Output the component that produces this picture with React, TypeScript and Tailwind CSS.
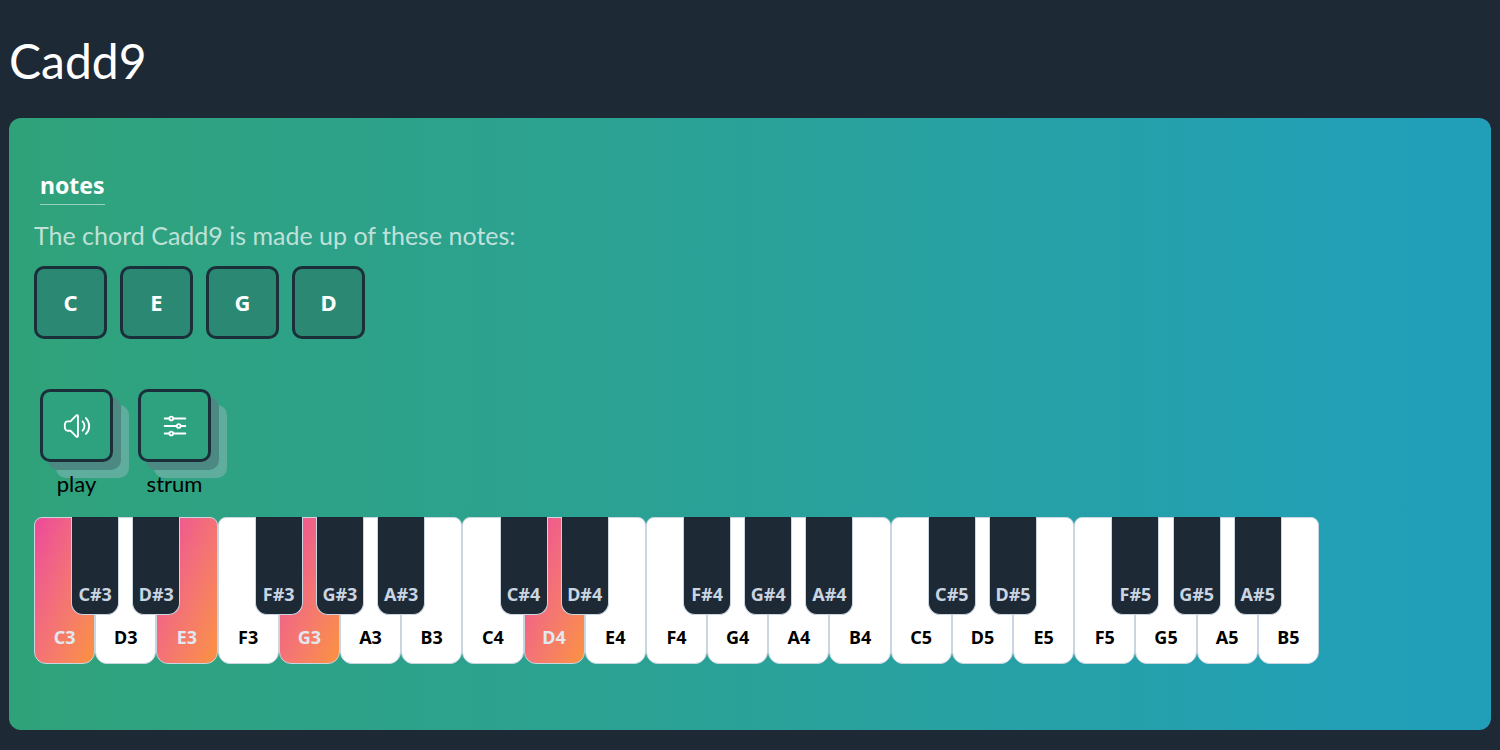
import React from 'react';
import { HiOutlineAdjustmentsHorizontal, HiOutlineSpeakerWave } from 'react-icons/hi2';

const CHORD = 'Cadd9';
const CHORD_NOTES = ['C', 'E', 'G', 'D'];
const ACTIVE_KEYS = ['C3', 'E3', 'G3', 'D4'];
const NATURALS = ['C', 'D', 'E', 'F', 'G', 'A', 'B'];
const WITH_SHARP = ['C', 'D', 'F', 'G', 'A'];

const keys = [3, 4, 5].flatMap((octave) =>
  NATURALS.map((note) => ({
    name: `${note}${octave}`,
    sharp: WITH_SHARP.includes(note) ? `${note}#${octave}` : null,
  }))
);

const actions = [
  { id: 'play', icon: <HiOutlineSpeakerWave className="size-[30px]" /> },
  { id: 'strum', icon: <HiOutlineAdjustmentsHorizontal className="size-[30px]" /> },
];

const Piano = () => (
  <ul className="grid w-full max-w-[1285px] grid-cols-21">
    {keys.map((key) => (
      <li key={key.name} className="relative">
        <button
          type="button"
          className={`flex h-[147px] w-full items-end justify-center rounded-t-lg rounded-b-xl border border-slate-300 pb-3 text-lg font-bold ${
            ACTIVE_KEYS.includes(key.name)
              ? 'bg-linear-to-br from-[#ec4899] to-[#fb923c] text-slate-200'
              : 'bg-white text-black'
          }`}
        >
          {key.name}
        </button>
        {key.sharp && (
          <button
            type="button"
            className="absolute top-0 -right-6 z-10 flex h-[98px] w-12 items-end justify-center rounded-b-xl border border-t-0 border-slate-300 bg-[#1e2936] pb-1.5 text-lg font-bold text-slate-300"
          >
            {key.sharp}
          </button>
        )}
      </li>
    ))}
  </ul>
);

const App = () => {
  return (
    <div className="min-h-screen bg-[#1e2936] px-[9px] pt-7 pb-5 font-['Noto_Sans',sans-serif]">
      <h1 className="font-[Lato,sans-serif] text-5xl leading-[66px] text-white">{CHORD}</h1>

      <main className="mt-6 rounded-xl bg-linear-to-r from-[#30a27a] via-[#2aa198] to-[#219fb8] to-95% pt-12 pr-6 pb-[66px] pl-[25px]">
        <h2 className="ml-1.5 inline-block border-b border-white/50 text-[23px] leading-[38px] font-bold text-white">notes</h2>
        <p className="mt-3 font-[Lato,sans-serif] text-[25px] leading-9 text-white/70">The chord {CHORD} is made up of these notes:</p>

        <ul className="mt-[13px] flex gap-[13px]">
          {CHORD_NOTES.map((note) => (
            <li
              key={note}
              className="flex size-[73px] items-center justify-center rounded-[10px] border-3 border-[#1b2f3a] bg-[#2b8873] pb-0.5 text-[22px] leading-8 font-bold text-white"
            >
              {note}
            </li>
          ))}
        </ul>

        <div className="mt-[50px] mb-[15px] ml-1.5 flex gap-[25px]">
          {actions.map((action) => (
            <div key={action.id} className="flex w-[73px] flex-col items-center">
              <button
                type="button"
                aria-labelledby={action.id}
                className="flex size-[73px] items-center justify-center rounded-[10px] border-3 border-[#1b2f3a] bg-[#2ea17f] text-white shadow-[8px_8px_0_#4c8983,16px_16px_0_#5fae9d]"
              >
                {action.icon}
              </button>
              <span id={action.id} className="relative mt-1 font-[Lato,sans-serif] text-[22px] leading-9 text-black">{action.id}</span>
            </div>
          ))}
        </div>

        <Piano />
      </main>
    </div>
  );
};

export default App;
